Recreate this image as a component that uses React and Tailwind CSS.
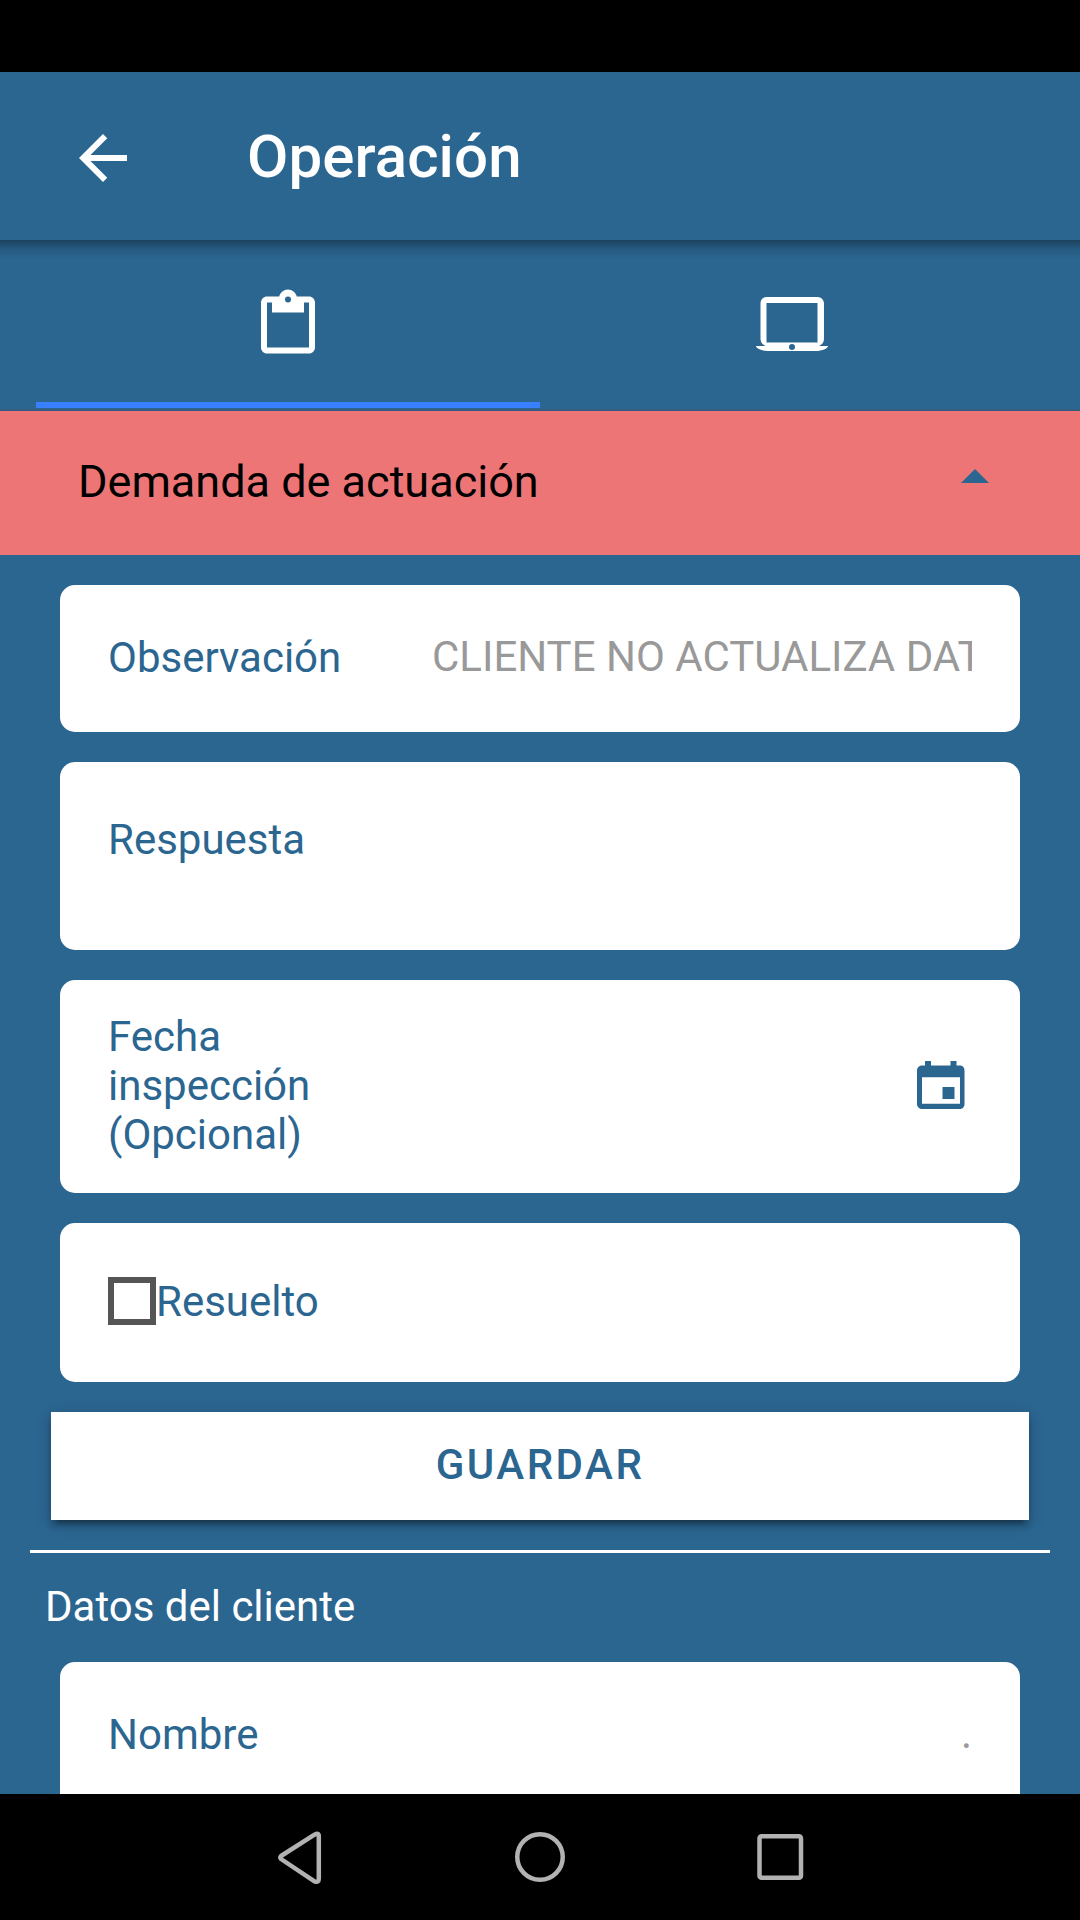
import React from 'react';

const ArrowBackIcon = () => (
  <svg viewBox="0 0 24 24" className="size-[72px] fill-white">
    <path d="M20 11H7.83l5.59-5.59L12 4l-8 8 8 8 1.41-1.41L7.83 13H20v-2z" />
  </svg>
);

const ClipboardIcon = () => (
  <svg viewBox="0 -0.5 54 64" className="h-16 w-[54px] overflow-visible fill-white">
    <path
      fillRule="evenodd"
      d="M6 7h12.2C19.3 3 22.8 0 27 0s7.7 3 8.8 7H48c3.3 0 6 2.7 6 6v45c0 3.3-2.7 6-6 6H6c-3.3 0-6-2.7-6-6V13c0-3.3 2.7-6 6-6zm0 6v45h42V13h-5v10H11V13H6zM27 7a3 3 0 1 0 0 6 3 3 0 0 0 0-6z"
    />
  </svg>
);

const LaptopIcon = () => (
  <svg viewBox="0 0 72 54" className="h-[54px] w-[72px] fill-white">
    <path
      fillRule="evenodd"
      d="M10.5 0h51C65 0 68 3 68 6.3V42c0 3-2 5.800-5 7h9c0 2.500-6 5-12 5H12C6 54 0 51.500 0 49h9.500c-3-1.200-5-4-5-7V6.300C4.500 3 7 0 10.500 0zm0 6v39.500h51V6h-51zM36 47a3 3 0 1 0 0 6 3 3 0 0 0 0-6z"
    />
  </svg>
);

const CalendarIcon = () => (
  <svg viewBox="0 0 48 48" className="size-12 fill-[#2b6691]">
    <path
      fillRule="evenodd"
      d="M8 0h6v4.500h19.500V0h6v4.500H43c2.800 0 4.500 2.200 4.500 5V43c0 2.800-1.700 5-4.500 5H5c-2.800 0-5-2.200-5-5V9.500c0-2.800 2.200-5 5-5h3V0zM5 16.300v26.400h38V16.300H5zM25.500 26h12v12h-12V26z"
    />
  </svg>
);

const Card = ({ className = '', children }) => (
  <div className={`mx-[60px] flex shrink-0 rounded-[15px] bg-white px-12 ${className}`}>{children}</div>
);

const App = () => {
  return (
    <div className="flex h-[1920px] w-[1080px] flex-col overflow-hidden bg-[#2b6691] font-['Roboto',sans-serif] text-[42px] leading-[49px] text-[#2b6691]">
      <div className="h-[72px] shrink-0 bg-black" />

      {/* Toolbar */}
      <header className="relative flex h-[168px] shrink-0 items-center bg-[#2b6691] pt-1 pl-[67px] text-white">
        <ArrowBackIcon />
        <h1 className="mb-0.5 ml-[108px] text-[60px] leading-[70px] font-medium tracking-[0.1px]">Operación</h1>
        <div className="absolute inset-x-0 top-full h-5 bg-linear-to-b from-black/35 via-black/10 via-50% to-transparent" />
      </header>

      {/* Tabs */}
      <nav className="grid h-[171px] shrink-0 grid-cols-2 border-b-2 border-[#335c80] px-9">
        <button className="flex h-[168px] items-start justify-center border-b-[6px] border-[#3880ff] pt-[49px]">
          <ClipboardIcon />
        </button>
        <button className="flex items-start justify-center pt-[57px]">
          <LaptopIcon />
        </button>
      </nav>

      {/* Section header */}
      <div className="flex h-36 shrink-0 items-center justify-between bg-[#ed7576] pr-[91px] pb-1 pl-[78px]">
        <h2 className="text-[45px] leading-[53px] text-black">Demanda de actuación</h2>
        <svg viewBox="0 0 28 14" className="mb-2.5 h-3.5 w-7 fill-[#2b6691]">
          <path d="M14 0 28 14H0z" />
        </svg>
      </div>

      <main className="flex min-h-0 flex-1 flex-col overflow-hidden pt-[30px]">
        <Card className="h-[147px] items-center pb-0.5">
          <span className="w-[324px]">Observación</span>
          <div className="mb-0.5 flex-1 overflow-hidden whitespace-nowrap text-[#999]">
            CLIENTE NO ACTUALIZA DATOS
          </div>
        </Card>

        <Card className="mt-[30px] h-[188px] pt-[53px]">
          <span>Respuesta</span>
        </Card>

        <Card className="mt-[30px] h-[213px] items-center justify-between pr-[55px] pb-[3px]">
          <span className="w-[210px]">Fecha inspección (Opcional)</span>
          <CalendarIcon />
        </Card>

        <Card className="mt-[30px] h-[159px] items-center pb-[3px]">
          <span className="size-12 border-[6px] border-[#555]" />
          <span>Resuelto</span>
        </Card>

        <button className="mx-[51px] mt-[30px] h-[108px] shrink-0 bg-white pb-[3px] font-medium tracking-[2.5px] shadow-[0_9px_3px_-6px_rgba(0,0,0,0.2),0_6px_6px_0_rgba(0,0,0,0.2),0_3px_15px_0_rgba(0,0,0,0.2)]">
          GUARDAR
        </button>

        <div className="mx-[30px] mt-[30px] h-[3px] shrink-0 bg-white" />

        <h3 className="mt-[29px] mb-[31px] shrink-0 pl-[45px] text-white">Datos del cliente</h3>

        <Card className="h-[188px] justify-between pt-12">
          <span>Nombre</span>
          <span className="-mt-px text-[#999]">.</span>
        </Card>
      </main>

      {/* Android navigation bar */}
      <footer className="flex h-[126px] shrink-0 items-center justify-center bg-black">
        <svg viewBox="0 0 1080 126" className="h-[126px] w-[1080px] fill-none stroke-[#b2b2b2] stroke-[4.5]">
          <path d="M281 62Q279.500 63.500 281 65L314.500 87.300Q318.800 89 318.800 85V42Q318.800 38.500 314.500 40.700L281 62z" strokeLinejoin="round" />
          <circle cx="540" cy="63" r="22.750" />
          <rect x="759.500" y="42.250" width="41.500" height="41.500" rx="2" />
        </svg>
      </footer>
    </div>
  );
};

export default App;
